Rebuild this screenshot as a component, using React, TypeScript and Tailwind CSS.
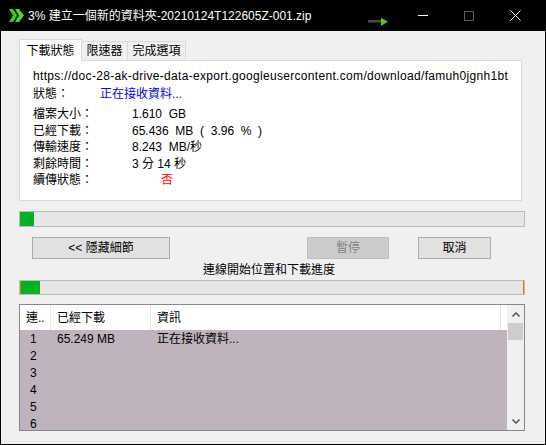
import React from "react";

function TitleBar() {
  return (
    <div className="relative h-[31px] flex items-center text-white text-[12px] shrink-0">
      <svg className="ml-[9px] w-[15px] h-[13px]" viewBox="0 0 15 13">
        <polygon points="0,0 4,0 8,6.5 4,13 0,13 4,6.5" fill="#3ccf15" />
        <polygon points="6,0 10,0 15,6.5 10,13 6,13 10,6.5" fill="#49dc1f" />
      </svg>
      <span className="ml-[4px] leading-[16px]">3% 建立一個新的資料夾-20210124T122605Z-001.zip</span>
      <svg className="absolute left-[368px] top-[18px] w-[21px] h-[9px]" viewBox="0 0 21 9">
        <rect x="0" y="2" width="14" height="2.5" fill="#4a4a4a" />
        <polygon points="13,0 20,3.5 13,8" fill="#4fd016" />
      </svg>
      <div className="ml-auto mr-[8px] flex h-full">
        <div className="w-[46px] h-full flex items-center justify-center">
          <div className="w-[10px] h-[1px] bg-white" />
        </div>
        <div className="w-[46px] h-full flex items-center justify-center">
          <div className="w-[10px] h-[10px] border border-[#5a5a5a]" />
        </div>
        <div className="w-[46px] h-full flex items-center justify-center">
          <svg className="w-[11px] h-[11px]" viewBox="0 0 11 11">
            <path d="M0.5 0.5 L10.5 10.5 M10.5 0.5 L0.5 10.5" stroke="#ffffff" strokeWidth="1" />
          </svg>
        </div>
      </div>
    </div>
  );
}

function Row({ label, children }: { label: string; children: React.ReactNode }) {
  return (
    <div className="flex h-[16.5px] items-center">
      <div className="w-[99px] whitespace-pre">{label}</div>
      <div className="whitespace-pre">{children}</div>
    </div>
  );
}

function Chevron({ down }: { down?: boolean }) {
  return (
    <svg className="w-[8px] h-[5px]" viewBox="0 0 8 5">
      <path
        d={down ? "M0.5 0.5 L4 4 L7.5 0.5" : "M0.5 4.5 L4 1 L7.5 4.5"}
        stroke="#606060"
        strokeWidth="1.6"
        fill="none"
      />
    </svg>
  );
}

export default function App() {
  const rows = ["1", "2", "3", "4", "5", "6"];
  return (
    <div className="w-[546px] h-[445px] bg-black flex flex-col overflow-hidden font-['Liberation_Sans','Noto_Sans_CJK_TC',sans-serif] text-black">
      <TitleBar />
      <div className="flex-1 mx-[1px] mb-[1px] bg-[#f0f0f0] pl-[18px] flex flex-col text-[12px]">
        {/* tabs */}
        <div className="mt-[8px] h-[21px] flex items-end">
          <div className="relative z-10 -mb-px h-[22px] w-[63px] bg-white border border-b-0 border-[#d9d9d9] flex items-center justify-center">
            下載狀態
          </div>
          <div className="h-[19px] w-[46px] bg-[#f0f0f0] border border-l-0 border-b-0 border-[#d9d9d9] flex items-center justify-center">
            限速器
          </div>
          <div className="h-[19px] w-[58px] bg-[#f0f0f0] border border-l-0 border-b-0 border-[#d9d9d9] flex items-center justify-center">
            完成選項
          </div>
        </div>
        {/* panel */}
        <div className="w-[503px] h-[141px] bg-white border border-[#d9d9d9] pl-[13px] pt-[7px]">
          <div className="w-[476px] h-[16px] leading-[16px] overflow-hidden whitespace-nowrap tracking-[0.32px]">
            https://doc-28-ak-drive-data-export.googleusercontent.com/download/famuh0jgnh1bt
          </div>
          <div className="flex h-[16px] items-center mt-[2px]">
            <div className="w-[67px]">狀態：</div>
            <div className="text-[#0000ff]">正在接收資料...</div>
          </div>
          <div className="mt-[4px]">
            <Row label="檔案大小：">1.610  GB</Row>
            <Row label="已經下載：">65.436  MB  (  3.96  %  )</Row>
            <Row label="傳輸速度：">8.243  MB/秒</Row>
            <Row label="剩餘時間：">3 分 14 秒</Row>
            <Row label="續傳狀態：">
              <span className="ml-[29px] text-[#ff0000]">否</span>
            </Row>
          </div>
        </div>
        {/* progress 1 */}
        <div className="mt-[10px] w-[506px] h-[16px] border border-[#bcbcbc] bg-[#e6e6e6]">
          <div className="w-[14px] h-full bg-[#06b025]" />
        </div>
        {/* buttons */}
        <div className="mt-[10px] flex h-[22px]">
          <div className="ml-[13px] w-[138px] h-full border border-[#adadad] bg-[#e1e1e1] flex items-center justify-center">
            &lt;&lt; 隱藏細節
          </div>
          <div className="ml-[137px] w-[82px] h-full border border-[#bfbfbf] bg-[#cccccc] text-[#838383] flex items-center justify-center">
            暫停
          </div>
          <div className="ml-[29px] w-[73px] h-full border border-[#adadad] bg-[#e1e1e1] flex items-center justify-center">
            取消
          </div>
        </div>
        <div className="mt-[3px] h-[16px] leading-[16px] pl-[184px]">連線開始位置和下載進度</div>
        {/* progress 2 */}
        <div className="mt-[2px] w-[506px] h-[15px] border border-[#bcbcbc] bg-[#e6e6e6] flex">
          <div className="w-[1px] h-full bg-[#f07000]" />
          <div className="w-[19px] h-full bg-[#06b025]" />
          <div className="flex-1" />
          <div className="w-[1px] h-full bg-[#f07000]" />
        </div>
        {/* table */}
        <div className="mt-[9px] w-[506px] h-[127px] border border-[#828790] flex overflow-hidden">
          <div className="flex-1 flex flex-col">
            <div className="h-[25px] bg-white flex items-center shrink-0">
              <div className="w-[31px] h-full border-r border-[#e5e5e5] pl-[6px] flex items-center">連..</div>
              <div className="w-[100px] h-full border-r border-[#e5e5e5] pl-[6px] flex items-center">已經下載</div>
              <div className="w-[350px] h-full border-r border-[#e5e5e5] pl-[6px] flex items-center">資訊</div>
            </div>
            <div className="flex-1 bg-[#bfb4bd] overflow-hidden text-[12px]">
              {rows.map((r, i) => (
                <div key={r} className="h-[17px] flex items-center">
                  <div className="w-[31px] pl-[10px]">{r}</div>
                  <div className="w-[100px] pl-[6px]">{i === 0 ? "65.249 MB" : ""}</div>
                  <div className="pl-[6px]">{i === 0 ? "正在接收資料..." : ""}</div>
                </div>
              ))}
            </div>
          </div>
          <div className="w-[17px] bg-[#f0f0f0] flex flex-col items-center">
            <div className="h-[17px] flex items-center justify-center mt-[1px]">
              <Chevron />
            </div>
            <div className="w-[15px] h-[17px] bg-[#cdcdcd]" />
            <div className="flex-1" />
            <div className="h-[17px] flex items-center justify-center">
              <Chevron down />
            </div>
          </div>
        </div>
      </div>
    </div>
  );
}
